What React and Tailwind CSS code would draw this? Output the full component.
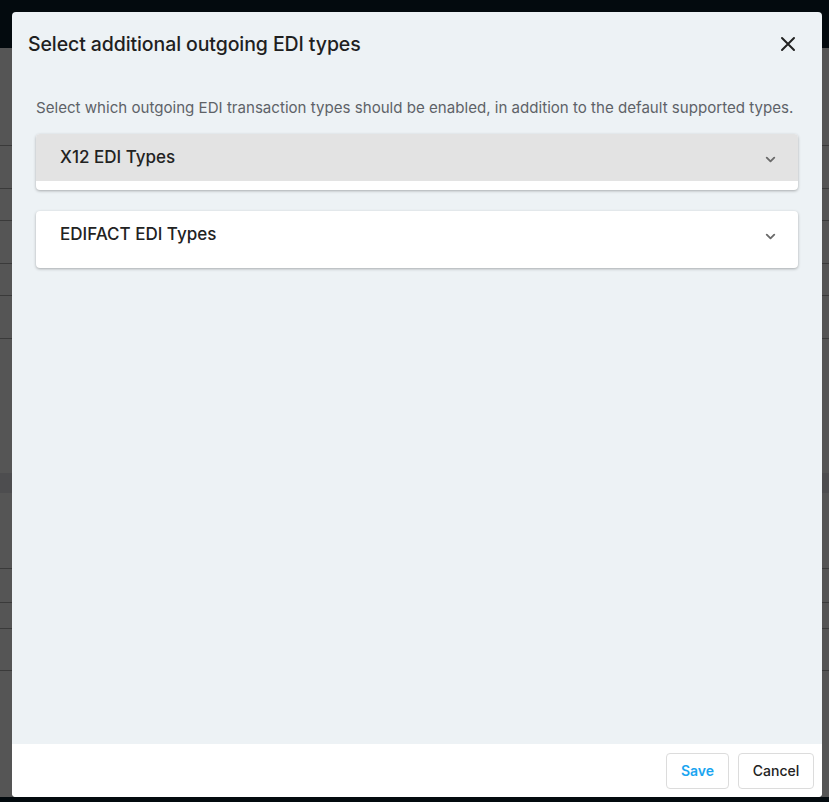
import React from "react";

function Chevron() {
  return (
    <svg width="15" height="15" viewBox="0 0 24 24" fill="none" stroke="#6b6b6b" strokeWidth="3" strokeLinecap="round" strokeLinejoin="round">
      <path d="M6 9l6 6 6-6" />
    </svg>
  );
}

function Section({ title, open }) {
  return (
    <div className="bg-white rounded-[4px] shadow-[0_1px_3px_rgba(0,0,0,0.3)]">
      <div className={"flex items-center justify-between h-[47px] pl-6 pr-5 rounded-t-[4px] " + (open ? "bg-[#e3e3e3]" : "")}>
        <span className="text-[17px] font-medium text-[#222]">{title}</span>
        <span className="mt-1"><Chevron /></span>
      </div>
      <div className={open ? "h-[9px]" : "h-[10px]"}></div>
    </div>
  );
}

export default function App() {
  const lines = [145, 188, 220, 263, 295, 338, 568, 602, 628, 670];
  return (
    <div className="relative w-[829px] h-[802px] overflow-hidden bg-[#555555]" style={{ fontFamily: "Inter, 'Noto Sans', sans-serif" }}>
      <div className="h-12 bg-[#030a0e]"></div>
      {lines.map((y) => (
        <div key={y} className="absolute left-0 right-0 h-px bg-[#3a3a3a]" style={{ top: y }}></div>
      ))}
      <div className="absolute left-0 right-0 top-[473px] h-[20px] bg-[#4d4d4f]"></div>
      <div className="absolute left-0 right-0 bottom-0 h-[5px] bg-[#030a0e]"></div>

      <div className="absolute left-3 top-3 w-[810px] h-[785px] rounded-[4px] overflow-hidden bg-[#edf2f5] flex flex-col">
        <div className="flex items-center justify-between h-[64px] pl-4 pr-[26px]">
          <h2 className="text-[19.5px] font-medium text-[#1f1f1f] tracking-[-0.1px] mt-[1px]">Select additional outgoing EDI types</h2>
          <svg width="16" height="16" viewBox="0 0 16 16" stroke="#222" strokeWidth="2" strokeLinecap="round">
            <path d="M2 2l12 12M14 2L2 14" />
          </svg>
        </div>
        <div className="flex-1 px-6 pt-[22px]">
          <p className="text-[15.1px] leading-[20px] whitespace-nowrap text-[#5e6268] mb-[16px]">Select which outgoing EDI transaction types should be enabled, in addition to the default supported types.</p>
          <div className="flex flex-col gap-[21px]">
            <Section title="X12 EDI Types" open />
            <Section title="EDIFACT EDI Types" />
          </div>
        </div>
        <div className="h-[53px] bg-white flex items-center justify-end gap-[9px] pr-2">
          <button className="h-[36px] w-[63px] rounded-[4px] border border-[#dcdcdc] bg-white text-[14px] font-semibold text-[#1ba5f0]">Save</button>
          <button className="h-[36px] w-[76px] rounded-[4px] border border-[#dcdcdc] bg-white text-[14px] font-medium text-[#222]">Cancel</button>
        </div>
      </div>
    </div>
  );
}
